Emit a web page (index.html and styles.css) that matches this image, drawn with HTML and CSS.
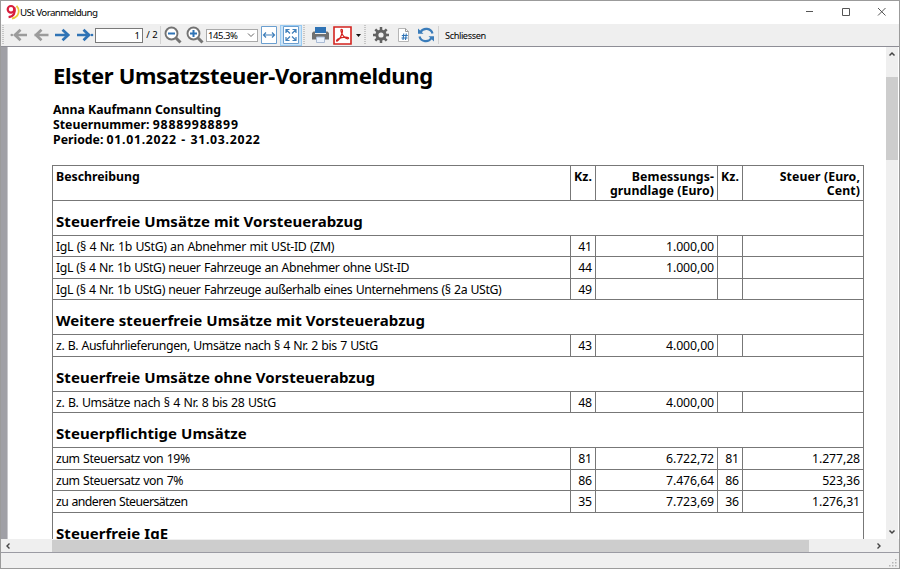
FILE: index.html
```
<!DOCTYPE html>
<html lang="de">
<head>
<meta charset="utf-8">
<title>USt Voranmeldung</title>
<link rel="stylesheet" href="styles.css">
</head>
<body>
<div class="window">
  <header class="titlebar">
    <svg class="logo" width="14" height="16" viewBox="0 0 14 16" fill="none"><path d="M10.500 1.800C14.500 6 13 13 6 14.500" stroke="#ecc93d" stroke-width="1.800"/><circle cx="5" cy="5.300" r="3.300" stroke="#d81e3c" stroke-width="2.200"/><path d="M8.400 3.500c1.300 5-.5 9-5.800 9.700" stroke="#d81e3c" stroke-width="2.200"/></svg>
    <span class="caption">USt Voranmeldung</span>
    <svg class="controls" width="90" height="16" viewBox="0 0 90 16" fill="none" stroke="#555"><path d="M3 7.500h7M39.500 4.500h7v7h-7zM75 4l7.500 7.500M82.500 4L75 11.500"/></svg>
  </header>
  <nav class="toolbar">
    <i class="grip"></i>
    <svg class="arrows" width="86" height="16" viewBox="0 0 86 16" fill="none" stroke-width="2.700"><g stroke="#9b9b9b"><path d="M4 8h13M10.500 2.800L5 8l5.500 5.200M24.500 8h14M31.500 2.800L26 8l5.500 5.200"/></g><circle cx="1.800" cy="8" r="1.300" fill="#9b9b9b"/><g stroke="#2f73b5"><path d="M45 8h14M52.500 2.800L58.200 8l-5.700 5.200M67 8h13M73.500 2.800L79 8l-5.500 5.200"/></g><circle cx="82" cy="8" r="1.300" fill="#2f73b5"/></svg>
    <span class="page-box">1</span>
    <span class="page-total">/ 2</span>
    <i class="sep"></i>
    <svg class="zoom-out" width="18" height="18" viewBox="0 0 18 18" fill="none"><circle cx="7.500" cy="7.500" r="6" fill="#fff" stroke="#737373" stroke-width="1.900"/><path d="M12 12l4.500 4.500" stroke="#737373" stroke-width="3"/><path d="M4 7.500h7" stroke="#2f73b5" stroke-width="2"/></svg>
    <svg class="zoom-in" width="18" height="18" viewBox="0 0 18 18" fill="none"><circle cx="7.500" cy="7.500" r="6" fill="#fff" stroke="#737373" stroke-width="1.900"/><path d="M12 12l4.500 4.500" stroke="#737373" stroke-width="3"/><path d="M4 7.500h7M7.500 4v7" stroke="#2f73b5" stroke-width="2"/></svg>
    <span class="zoom-box"><span class="zoom-value">145.3%</span><svg width="8" height="6" viewBox="0 0 8 6" fill="none" stroke="#666"><path d="M1 1.500l3 3 3-3"/></svg></span>
    <svg class="fit-width" width="16" height="18" viewBox="0 0 16 18" fill="none" stroke="#3f7fba"><path d="M.5.500h15v17H.5z" fill="#fff" stroke="#6b9fd0"/><path d="M3 9h10M5 6.500L2.500 9 5 11.500M11 6.500L13.500 9 11 11.500" stroke-width="1.200"/></svg>
    <span class="fit-page"><svg width="16" height="18" viewBox="0 0 16 18" fill="none" stroke="#3f7fba"><path d="M.5.500h15v17H.5z" fill="#fff" stroke="#6b9fd0"/><path d="M3 7V3.500h3.500M9.500 3.500H13V7M3 11v3.500h3.500M9.500 14.500H13V11M3.500 4L7 7.500M12.500 4L9 7.500M3.500 14L7 10.500M12.500 14L9 10.500" stroke-width="1.200"/></svg></span>
    <i class="grip"></i>
    <svg class="printer" width="17" height="16" viewBox="0 0 17 16"><path d="M3 0h11v6H3z" fill="#2f73b5"/><path d="M1.500 4.500H3V7h11V4.500h1.500L17 6v6.500H0V6z" fill="#707070"/><path d="M4.500 10h8v5.500h-8z" fill="#e9f1fc" stroke="#a9bbd5"/></svg>
    <svg class="pdf" width="19" height="19" viewBox="0 0 19 19" fill="none" stroke="#d3231f"><path d="M1 1h17v17H1z" fill="#fff" stroke-width="1.600"/><path d="M8.700 3.300c-1.200 0-.9 2 .2 4.200 1.500 3.100 3.500 5 5.700 5.300 1.300.1 1.300-1.300 0-1.400-2.500-.4-7 .3-9.700 1.700-1.700 1-1.700 2.500-.5 1.900 2-1 5-7 5.100-10.100 0-1-.2-1.600-.8-1.600z" stroke-width="1.200"/></svg>
    <svg class="drop" width="5" height="3" viewBox="0 0 5 3"><path d="M0 0h5L2.500 3z" fill="#111"/></svg>
    <i class="grip"></i>
    <svg class="gear" width="16" height="16" viewBox="0 0 16 16" fill="none" stroke="#626262"><circle cx="8" cy="8" r="4.100" stroke-width="3"/><path d="M8 0v3M8 13v3M0 8h3M13 8h3M2.300 2.300l2.200 2.200M11.500 11.500l2.200 2.200M13.700 2.300l-2.200 2.200M4.500 11.500l-2.200 2.200" stroke-width="2.500"/></svg>
    <svg class="doc" width="11" height="14" viewBox="0 0 11 14" fill="none"><path d="M.5.500h7l3 3v10H.5z" fill="#fff" stroke="#b5b5b5"/><path d="M7.500.500v3h3" stroke="#999"/><path d="M5.800 5.500L5 12M8.300 5.500L7.500 12M3.800 7.500h6M3.500 10h6" stroke="#2f73b5" stroke-width="1.100"/></svg>
    <svg class="refresh" width="18" height="16" viewBox="0 0 18 16" fill="none" stroke="#3a7cba" stroke-width="2.200"><path d="M15.500 6.500C14 1 6.500.2 3.500 5M2.500 9.500C4 15 11.500 15.800 14.500 11"/><path d="M6.500 6.700H1V1.500zM11.500 9.300H17v5.200z" fill="#3a7cba" stroke="none"/></svg>
    <i class="sep"></i>
    <span class="close-label">Schliessen</span>
  </nav>
  <div class="viewer">
    <i class="gutter"></i>
    <main class="page">
      <h1>Elster Umsatzsteuer-Voranmeldung</h1>
      <div class="meta">
        <p>Anna Kaufmann Consulting</p>
        <p>Steuernummer: <span class="figures">98889988899</span></p>
        <p>Periode: <span class="figures dates">01.01.2022 - 31.03.2022</span></p>
      </div>
      <section class="table">
        <div class="row head"><b>Beschreibung</b><b>Kz.</b><b>Bemessungs-<br>grundlage (Euro)</b><b>Kz.</b><b>Steuer (Euro,<br>Cent)</b></div>
        <h2>Steuerfreie Umsätze mit Vorsteuerabzug</h2>
        <div class="row"><span class="wide">IgL (§ 4 Nr. 1b UStG) an Abnehmer mit USt-ID (ZM)</span><span>41</span><span>1.000,00</span><span></span><span></span></div>
        <div class="row"><span>IgL (§ 4 Nr. 1b UStG) neuer Fahrzeuge an Abnehmer ohne USt-ID</span><span>44</span><span>1.000,00</span><span></span><span></span></div>
        <div class="row"><span>IgL (§ 4 Nr. 1b UStG) neuer Fahrzeuge außerhalb eines Unternehmens (§ 2a UStG)</span><span>49</span><span></span><span></span><span></span></div>
        <h2>Weitere steuerfreie Umsätze mit Vorsteuerabzug</h2>
        <div class="row"><span>z. B. Ausfuhrlieferungen, Umsätze nach § 4 Nr. 2 bis 7 UStG</span><span>43</span><span>4.000,00</span><span></span><span></span></div>
        <h2>Steuerfreie Umsätze ohne Vorsteuerabzug</h2>
        <div class="row"><span class="wide">z. B. Umsätze nach § 4 Nr. 8 bis 28 UStG</span><span>48</span><span>4.000,00</span><span></span><span></span></div>
        <h2>Steuerpflichtige Umsätze</h2>
        <div class="row"><span>zum Steuersatz von 19%</span><span>81</span><span>6.722,72</span><span>81</span><span>1.277,28</span></div>
        <div class="row"><span>zum Steuersatz von 7%</span><span>86</span><span>7.476,64</span><span>86</span><span>523,36</span></div>
        <div class="row"><span class="tight">zu anderen Steuersätzen</span><span>35</span><span>7.723,69</span><span>36</span><span>1.276,31</span></div>
        <h2>Steuerfreie IgE</h2>
      </section>
    </main>
    <aside class="vscroll">
      <svg width="8" height="6" viewBox="0 0 8 6" fill="none" stroke="#444" stroke-width="1.500"><path d="M1.500 4.500L4 2l2.500 2.500"/></svg>
      <i class="vthumb"></i>
      <svg class="down" width="8" height="6" viewBox="0 0 8 6" fill="none" stroke="#444" stroke-width="1.500"><path d="M1.500 1.500L4 4l2.500-2.500"/></svg>
    </aside>
  </div>
  <div class="hscroll">
    <svg width="6" height="8" viewBox="0 0 6 8" fill="none" stroke="#444" stroke-width="1.400"><path d="M4.500 1.500L2 4l2.500 2.500"/></svg>
    <i class="hthumb"></i>
    <svg class="right" width="6" height="8" viewBox="0 0 6 8" fill="none" stroke="#444" stroke-width="1.400"><path d="M1.500 1.500L4 4 1.500 6.500"/></svg>
  </div>
  <footer class="status"><svg width="8" height="8" viewBox="0 0 8 8" fill="#b5b5b5"><path d="M6 0h1.500v1.500H6zM3 3h1.500v1.500H3zM6 3h1.500v1.500H6zM0 6h1.500v1.500H0zM3 6h1.500v1.500H3zM6 6h1.500v1.500H6z"/></svg></footer>
</div>
</body>
</html>
```
FILE: styles.css
```
* { box-sizing: border-box; }
body { margin: 0; font-family: "Noto Sans", sans-serif; color: #000; }
svg { display: block; flex: none; }
i { display: block; flex: none; }
.window { width: 900px; height: 569px; display: flex; flex-direction: column; border: 1px solid #9b9b9b; background: #fff; overflow: hidden; }

.titlebar { height: 23px; flex: none; display: flex; align-items: center; padding: 0 0 2px 5px; }
.caption { font-size: 9.8px; letter-spacing: -.6px; flex: 1; white-space: nowrap; padding-top: 1px; }
.controls { margin-right: 6px; }

.toolbar { height: 23px; flex: none; display: flex; align-items: center; background: #efefef; border-bottom: 1px solid #8e8e96; font-size: 9.5px; }
.toolbar > * { flex: none; }
.grip { width: 2px; height: 20px; margin-left: 1px; background: repeating-linear-gradient(#c6c6c6 0 1px, #efefef 1px 2px); }
.sep { width: 1px; height: 18px; background: #d2d2d2; }
.arrows { margin-left: 6px; }
.page-box { width: 48px; height: 15px; margin-left: -1px; border: 1px solid #7a7a7a; background: #fff; text-align: right; padding-right: 2px; line-height: 14px; }
.page-total { width: 16px; text-align: center; line-height: 14px; margin-left: 1px; white-space: nowrap; }
.zoom-out { margin-left: 3px; }
.zoom-in { margin-left: 4px; }
.zoom-box { width: 52px; height: 13px; border: 1px solid #a9a9a9; background: #fff; display: flex; align-items: center; justify-content: space-between; padding: 0 2px 0 1px; margin-left: 2px; }
.zoom-value { font-size: 9.5px; letter-spacing: -.45px; }
.fit-width { margin-left: 3px; }
.fit-page { width: 22px; height: 21px; margin-left: 3px; background: #cce4f7; border: 1px solid #99cbf3; display: grid; place-items: center; }
.printer { margin-left: 7px; }
.pdf { margin-left: 4px; }
.drop { margin-left: 4px; margin-right: 2px; }
.gear { margin-left: 7px; }
.doc { margin-left: 9px; }
.refresh { margin-left: 8px; margin-right: 3px; }
.close-label { margin-left: 6px; font-size: 9.2px; letter-spacing: -.4px; }

.viewer { height: 492px; flex: none; display: flex; overflow: hidden; }
.gutter { width: 7px; background: #a0a0a6; border-right: 1px solid #c8c8cc; }
.page { flex: 1; padding: 13px 0 0 44px; overflow: hidden; }
h1 { margin: 0; height: 30px; line-height: 30px; font-size: 22px; letter-spacing: -.35px; padding-left: 1px; white-space: nowrap; }
.meta { padding: 12px 0 0 1px; height: 75px; font-size: 12.300px; font-weight: bold; }
.meta p { margin: 0; height: 15px; line-height: 15px; white-space: nowrap; }
.figures { letter-spacing: .78px; }
.dates { letter-spacing: .7px; word-spacing: .6px; }
.table { width: 812px; border: 1px solid #777; border-bottom: 0; height: 400px; }
.row { display: grid; grid-template-columns: 518px 25px 122px 25px 120px; height: 21.5px; border-bottom: 1px solid #777; font-size: 12.300px; }
.row > * { border-right: 1px solid #777; padding: 1px 3px 0; text-align: right; line-height: 19.5px; white-space: nowrap; letter-spacing: -.1px; }
.row > :first-child { text-align: left; letter-spacing: -.4px; word-spacing: .6px; }
.row > .wide { letter-spacing: -.32px; }
.row > .tight { letter-spacing: -.57px; }
.row > :last-child { border-right: 0; }
.head { height: 34.500px; }
.row.head > * { line-height: 14px; padding-top: 4px; letter-spacing: .1px; word-spacing: 0; }
.row.head > :first-child { letter-spacing: 0; }
h2 { margin: 0; height: 35px; border-bottom: 1px solid #777; font-size: 15px; line-height: 41px; letter-spacing: .05px; padding-left: 3px; white-space: nowrap; }

.vscroll { width: 12px; background: #efefef; display: flex; flex-direction: column; align-items: center; padding-top: 4px; margin-right: 1px; }
.vthumb { width: 12px; height: 83px; background: #cdcdcd; margin-top: 20px; }
.down { margin-top: auto; margin-bottom: 4px; }
.hscroll { height: 13px; flex: none; background: #efefef; display: flex; align-items: center; padding-left: 4px; }
.hthumb { width: 757px; height: 12px; background: #cdcdcd; margin-left: 41px; }
.right { margin-left: auto; margin-right: 17px; }
.status { flex: 1; background: #f0f0f0; border-top: 1px solid #9b9ba3; display: flex; justify-content: flex-end; align-items: flex-end; padding: 0 2px 1px 0; }
```
